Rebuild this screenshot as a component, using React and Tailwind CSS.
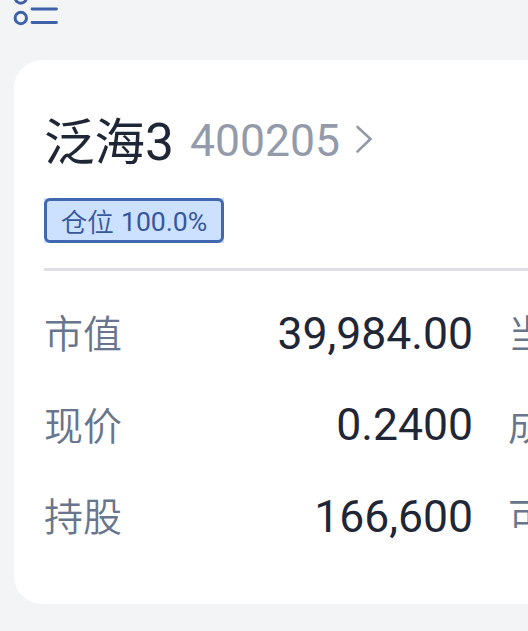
const ROWS = [
  { label: '市值', value: '39,984.00', next: '当' },
  { label: '现价', value: '0.2400', next: '成' },
  { label: '持股', value: '166,600', next: '可' },
]

function ListIcon() {
  return (
    <svg className="block h-[60px] w-[60px]" viewBox="0 0 60 60" fill="none" stroke="#3f61a8" strokeWidth="3">
      <circle cx="20.8" cy="-2.5" r="5.7" />
      <circle cx="20.8" cy="18" r="5.7" />
      <path strokeLinecap="round" strokeWidth="2.8" d="M32 9h24.5M32 22.5h24.5" />
    </svg>
  )
}

export default function App() {
  return (
    <div className="h-[631px] w-[528px] overflow-hidden bg-[#f3f4f6] font-[Roboto,'Noto_Sans_CJK_SC',sans-serif]">
      <header className="h-[60px]">
        <ListIcon />
      </header>

      <main className="ml-[14px] h-[544px] w-[720px] rounded-[28px] bg-white px-[30px] pt-[50px]">
        {/* Stock name and code */}
        <div className="flex h-[60px] items-center whitespace-nowrap">
          <h1 className="pt-[5px] text-[50.5px] leading-[60px] text-[#1f2636]">
            泛海<span className="text-[51.5px]">3</span>
          </h1>
          <span className="ml-[16px] pt-[2px] text-[44.5px] leading-[60px] text-[#939bab]">400205</span>
          <svg className="ml-[15px] h-[30px] w-[18px]" viewBox="0 0 18 30" fill="none" stroke="#939bab" strokeWidth="2.6" strokeLinecap="round">
            <path d="M2.5 2L15.5 14L2.5 26.5" />
          </svg>
        </div>

        {/* Position share */}
        <div className="mt-[28px] flex h-[45px] w-[180px] items-center justify-center bg-[#cce1ff]">
          <div className="flex h-full w-full items-center justify-center whitespace-nowrap rounded-md border-3 border-[#4068b0] pt-[3px] text-[26.6px] leading-none text-[#37569b]">
            <span className="pt-[2px] font-[350]">仓位</span>
            <span className="ml-[7px]">100.0%</span>
          </div>
        </div>

        <div className="mt-[25px] h-[3px] bg-[#dfe0e5]" />

        <div className="mt-[17px]">
          {ROWS.map(row => (
            <div key={row.label} className="flex h-[91.5px] items-center whitespace-nowrap leading-[60px]">
              <span className="w-[120px] pt-[3px] text-[39px] font-[350] text-[#69758c]">{row.label}</span>
              <span className="w-[309px] text-right text-[44.5px] text-[#1f2636]">{row.value}</span>
              <span className="ml-[35px] pt-[3px] text-[39px] font-[350] text-[#69758c]">{row.next}</span>
            </div>
          ))}
        </div>
      </main>
    </div>
  )
}
